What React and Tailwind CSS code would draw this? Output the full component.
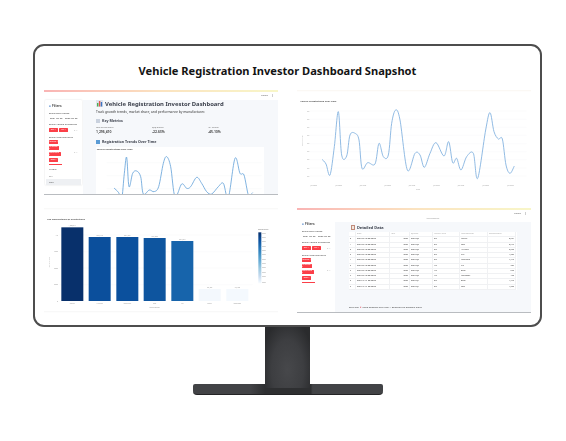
import { Fragment } from "react";

// zoomed coords (3x) traced from the reference
const trendPoints = [
  [252, 444], [266, 458], [275, 478], [283, 400], [290, 352], [297, 440], [308, 400], [320, 393], [332, 410],
  [340, 462], [358, 450], [372, 455], [386, 440], [400, 370], [410, 350], [422, 380], [435, 470], [455, 432],
  [470, 445], [482, 440], [500, 412], [515, 430], [530, 455], [545, 462], [565, 440], [580, 430], [595, 472],
  [615, 355], [630, 400], [642, 405], [655, 465], [664, 462], [668, 458],
];

const fullTrendPoints = [
  [96, 358], [108, 372], [120, 405], [133, 320], [145, 215], [155, 345], [170, 348], [180, 285], [195, 280],
  [207, 300], [216, 385], [233, 368], [255, 372], [267, 310], [280, 350], [295, 345], [305, 250], [317, 210],
  [330, 240], [352, 390], [375, 340], [390, 345], [403, 382], [420, 340], [438, 308], [462, 348], [476, 305],
  [488, 368], [500, 355], [513, 390], [530, 350], [550, 340], [563, 415], [587, 270], [600, 218], [612, 275],
  [625, 297], [637, 297], [648, 375], [660, 400], [673, 378],
];

const bars = [
  { x: 94, top: 67, fill: "#08306b", label: "Maruti", value: "1,025,814" },
  { x: 176, top: 96, fill: "#0b4f9c", label: "Hyundai", value: "883,412" },
  { x: 259, top: 96, fill: "#0b509d", label: "Mahindra", value: "881,907" },
  { x: 341, top: 99, fill: "#0e559f", label: "Tata", value: "866,230" },
  { x: 424, top: 108, fill: "#1764ab", label: "Kia", value: "821,004" },
  { x: 506, top: 252, fill: "#f3f8fd", label: "BMW", value: "68,120" },
  { x: 589, top: 252, fill: "#f4f9fe", label: "Mercedes", value: "67,480" },
];

const tableRows = [
  ["0", "2023-09-30 00:00:00", "2023", "2023-Q3", "2W", "Maruti", "2,894"],
  ["1", "2023-09-30 00:00:00", "2023", "2023-Q3", "2W", "Tata", "2,646"],
  ["2", "2023-09-30 00:00:00", "2023", "2023-Q3", "2W", "Hyundai", "3,862"],
  ["3", "2023-09-30 00:00:00", "2023", "2023-Q3", "2W", "TVS", "1,283"],
  ["4", "2023-09-30 00:00:00", "2023", "2023-Q3", "2W", "Mahindra", "4,715"],
  ["5", "2023-09-30 00:00:00", "2023", "2023-Q3", "4W", "Kia", "986"],
  ["6", "2023-09-30 00:00:00", "2023", "2023-Q3", "4W", "Bajaj", "572"],
  ["7", "2023-09-30 00:00:00", "2023", "2023-Q3", "4W", "Mercedes", "470"],
  ["8", "2023-12-31 00:00:00", "2023", "2023-Q4", "2W", "Bajaj", "1,745"],
  ["9", "2023-12-31 00:00:00", "2023", "2023-Q4", "2W", "Tata", "1,292"],
];

function smooth(points) {
  let d = `M${points[0][0]} ${points[0][1]}`;
  for (let i = 0; i < points.length - 1; i++) {
    const p0 = points[i - 1] || points[i];
    const p1 = points[i];
    const p2 = points[i + 1];
    const p3 = points[i + 2] || p2;
    const c1x = p1[0] + (p2[0] - p0[0]) / 6;
    const c1y = p1[1] + (p2[1] - p0[1]) / 6;
    const c2x = p2[0] - (p3[0] - p1[0]) / 6;
    const c2y = p2[1] - (p3[1] - p1[1]) / 6;
    d += ` C${c1x} ${c1y} ${c2x} ${c2y} ${p2[0]} ${p2[1]}`;
  }
  return d;
}

function GradientLine() {
  return <div className="h-[1.5px] shrink-0 bg-gradient-to-r from-[#f9b4b4] via-[#fbe3c0] to-[#f8f6c8]" />;
}

function ShareBar() {
  return (
    <div className="flex h-[8px] shrink-0 items-center justify-end gap-[3px] bg-white pr-[4px] text-[2.5px] text-[#666]">
      <span>Share</span>
      <span>⋮</span>
    </div>
  );
}

function Chip({ width, children }) {
  return (
    <span className={`flex h-[4.5px] items-center justify-center rounded-[0.5px] bg-[#fb3f48] text-[2.2px] leading-none text-white ${width}`}>
      {children} ×
    </span>
  );
}

function SidebarFilters({ children }) {
  return (
    <div className="flex flex-col px-[4px] pt-[5px] text-[2.4px] leading-none text-[#444]">
      <div className="mb-[4.2px] flex items-center gap-[1px] text-[3.2px] font-semibold text-[#333]">
        <span className="text-[#3b76c4]">●</span>
        <span>Filters</span>
      </div>
      <div className="mb-[2.6px]">Select Date Range</div>
      <div className="mb-[4.2px] whitespace-nowrap pl-[1px]">2021-09-30 – 2023-09-30</div>
      <div className="mb-[1.95px] whitespace-nowrap">Select Vehicle Categories</div>
      <div className="mb-[3.55px] flex w-[29px] items-center justify-between">
        <div className="flex gap-[1.5px]">
          <Chip width="w-[8.5px]">2W</Chip>
          <Chip width="w-[8.5px]">4W</Chip>
        </div>
        <span className="text-[#666]">× ⌄</span>
      </div>
      <div className="mb-[1.55px]">Select Manufacturers</div>
      <div className="flex w-[29px] items-center justify-between">
        <div className="flex flex-col gap-[1.5px]">
          <Chip width="w-[9px]">Maruti</Chip>
          <Chip width="w-[10px]">Hyundai</Chip>
          <Chip width="w-[11.5px]">Mahindra</Chip>
          <Chip width="w-[9px]">Tata</Chip>
          <div className="h-[1px] w-[13px] bg-[#fb3f48]" />
        </div>
        <span className="text-[#666]">× ⌄</span>
      </div>
      {children}
    </div>
  );
}

function BarsIcon() {
  return (
    <svg width="7" height="7" viewBox="0 0 7 7" className="shrink-0">
      <rect width="7" height="7" fill="#dfe5ee" />
      <rect x="1" y="3" width="1.4" height="3.5" fill="#4caf50" />
      <rect x="2.9" y="1" width="1.4" height="5.5" fill="#e2574c" />
      <rect x="4.8" y="2" width="1.4" height="4.5" fill="#3b76c4" />
    </svg>
  );
}

function DashboardScreen() {
  return (
    <div className="flex h-[105px] flex-col overflow-hidden border-b border-[#b9bcc0]">
      <GradientLine />
      <div className="flex min-h-0 flex-1">
        <div className="w-[39px] shrink-0 bg-white pt-[8px]">
          <div className="mx-[1px] h-[85.5px] rounded-[1px] bg-white shadow-[0_0_2px_rgba(0,0,0,0.14)]">
            <SidebarFilters>
              <div className="mt-[1.5px] -ml-[3px] -mr-[3px] flex flex-col text-[#555]">
                <span className="flex h-[6.3px] items-center pl-[3px]">Pragati</span>
                <span className="flex h-[6.3px] items-center pl-[3px]">KIA</span>
                <span className="flex h-[6.3px] items-center bg-[#eef0f3] pl-[3px]">Tata</span>
              </div>
            </SidebarFilters>
          </div>
        </div>
        <div className="flex min-w-0 flex-1 flex-col">
          <ShareBar />
          <div className="flex min-h-0 flex-1 flex-col overflow-hidden bg-[#f6f8fb] pl-[13px] pr-[14px]">
            <div className="flex items-center gap-[2px] text-[5.9px] font-bold leading-[8px] text-[#3a3f4b]">
              <BarsIcon />
              <span className="whitespace-nowrap">Vehicle Registration Investor Dashboard</span>
            </div>
            <p className="mt-[2.5px] whitespace-nowrap text-[3.3px] leading-[4px] text-[#333]">
              Track growth trends, market share, and performance by manufacturer.
            </p>
            <div className="mt-[4px] flex items-center gap-[2px] text-[3.6px] font-bold leading-[6px] text-[#3a3f4b]">
              <span className="h-[4px] w-[4px] bg-[#c9d1de]" />
              Key Metrics
            </div>
            <div className="mt-[2.75px] grid grid-cols-3 text-[2px] leading-[2.5px] text-[#777]">
              {[
                ["Total Registrations", "1,296,410"],
                ["QoQ Growth", "-22.63%"],
                ["YoY Growth", "-45.10%"],
              ].map(([label, value]) => (
                <div key={label}>
                  <div>{label}</div>
                  <div className="mt-[0.75px] text-[3.4px] font-semibold leading-[4px] text-[#333]">{value}</div>
                </div>
              ))}
            </div>
            <div className="mt-[4.5px] flex items-center gap-[2px] text-[3.6px] font-bold leading-[6px] text-[#3a3f4b]">
              <span className="h-[4px] w-[4px] bg-[#5a9bd5]" />
              Registration Trends Over Time
            </div>
            <div className="mt-[2.5px] h-[48px] shrink-0 bg-white">
              <svg viewBox="198 321 504 144" className="block h-[48px] w-[168px]">
                <text x="200" y="331" fontSize="7" fontWeight="600" fill="#444">Vehicle Registrations Over Time</text>
                {[368, 407, 446].map((y) => (
                  <line key={y} x1="230" x2="695" y1={y} y2={y} stroke="#f1f2f4" strokeWidth="1" />
                ))}
                <path d={smooth(trendPoints)} fill="none" stroke="#5f9fd8" strokeWidth="2.4" />
              </svg>
            </div>
          </div>
        </div>
      </div>
    </div>
  );
}

function LineChartScreen() {
  const gridY = [213, 238, 262, 286, 311, 335, 359, 384, 408];
  const ticks = [70, 145, 218, 292, 365, 438, 512, 586, 660];
  return (
    <div className="h-[105px]">
      <svg viewBox="21 150 702 315" className="block h-[105px] w-[234px]">
        <line x1="21" x2="723" y1="152" y2="152" stroke="#f7f3ec" strokeWidth="2" />
        <text x="31" y="186" fontSize="7" fontWeight="600" fill="#444">Vehicle Registrations Over Time</text>
        {gridY.map((y) => (
          <g key={y}>
            <line x1="60" x2="710" y1={y} y2={y} stroke="#f3f4f6" strokeWidth="1" />
            <text x="50" y={y + 2} fontSize="5" fill="#aaa">10k</text>
          </g>
        ))}
        <text x="40" y="318" fontSize="5" fill="#aaa" transform="rotate(-90 40 318)">Registrations</text>
        {ticks.map((x) => (
          <text key={x} x={x - 9} y="438" fontSize="5" fill="#aaa">Jan 2022</text>
        ))}
        <text x="379" y="450" fontSize="5" fill="#aaa">Date</text>
        <path d={smooth(fullTrendPoints)} fill="none" stroke="#7fb0de" strokeWidth="2.6" />
      </svg>
    </div>
  );
}

function BarChartScreen() {
  const barWidth = 66;
  const baseline = 288;
  const stops = ["#08306b", "#0b4f9c", "#2171b5", "#4292c6", "#6baed6", "#9ecae1", "#c6dbef", "#f7fbff"];
  return (
    <div className="h-[105px]">
      <svg viewBox="42 9 702 315" className="block h-[105px] w-[234px]">
        <defs>
          <linearGradient id="colorbar" x1="0" x2="0" y1="0" y2="1">
            {stops.map((color, i) => (
              <stop key={color} offset={i / (stops.length - 1)} stopColor={color} />
            ))}
          </linearGradient>
        </defs>
        <line x1="42" x2="744" y1="11" y2="11" stroke="#f5f5f3" strokeWidth="2" />
        <line x1="42" x2="744" y1="320" y2="320" stroke="#f1f1f1" strokeWidth="2" />
        <text x="52" y="44" fontSize="6.5" fontWeight="600" fill="#444">Top Manufacturers by Registrations</text>
        {[90, 140, 189, 239].map((y) => (
          <line key={y} x1="88" x2="668" y1={y} y2={y} stroke="#f2f3f5" strokeWidth="1" />
        ))}
        {[["1M", 92], ["750k", 142], ["500k", 191], ["250k", 241], ["0", 290]].map(([label, y]) => (
          <text key={label} x="84" y={y} fontSize="5" fill="#999" textAnchor="end">{label}</text>
        ))}
        <text x="60" y="172" fontSize="5" fill="#aaa" textAnchor="middle" transform="rotate(-90 60 172)">Registrations</text>
        {bars.map((bar) => (
          <g key={bar.label}>
            <rect x={bar.x} y={bar.top} width={barWidth} height={baseline - bar.top} fill={bar.fill} />
            <text x={bar.x + barWidth / 2} y={bar.top - 3} fontSize="5" fill="#999" textAnchor="middle">{bar.value}</text>
            <text x={bar.x + barWidth / 2} y="297" fontSize="5" fill="#999" textAnchor="middle">{bar.label}</text>
          </g>
        ))}
        <text x="374" y="308" fontSize="5" fill="#999" textAnchor="middle">Manufacturer</text>
        <text x="684" y="76" fontSize="5" fill="#777">Registrations</text>
        <rect x="685" y="82" width="9" height="153" fill="url(#colorbar)" />
        {[86, 99, 112, 125, 138, 151, 164, 177, 190, 203, 216, 233].map((y) => (
          <text key={y} x="697" y={y} fontSize="4.5" fill="#999">800k</text>
        ))}
      </svg>
    </div>
  );
}

function TableScreen() {
  const columns = ["", "Date", "Year", "Quarter", "Vehicle_Type", "Manufacturer", "Registrations"];
  const cellBase = "flex h-[5.25px] items-center border-b border-r border-[#f0f1f3] px-[1px]";
  return (
    <div className="flex h-[105px] flex-col overflow-hidden border-b border-[#b9bcc0]">
      <GradientLine />
      <div className="flex min-h-0 flex-1">
        <div className="w-[38px] shrink-0 bg-white pt-[8px] pl-[1px]">
          <SidebarFilters />
        </div>
        <div className="flex min-w-0 flex-1 flex-col">
          <ShareBar />
          <div className="flex min-h-0 flex-1 flex-col bg-[#f6f8fb] px-[14px]">
            <div className="-mx-[14px] flex h-[4px] shrink-0 items-start justify-center bg-white text-[2px] leading-none text-[#999]">
              Manufacturer
            </div>
            <div className="mt-[1.5px] flex items-center gap-[2px] py-[0.5px] pl-[2px] text-[3.9px] font-bold leading-[7px] text-[#3a3f4b]">
              <span className="h-[5px] w-[4px] border-[0.5px] border-[#c08a7a] bg-[#f0e7dd]" />
              Detailed Data
            </div>
            <div className="mt-[1px] grid grid-cols-[7px_34px_20px_23px_27px_28px_28px] bg-white text-[2px] leading-none text-[#444]">
              {columns.map((col, i) => (
                <div key={col || i} className={`${cellBase} text-[#aaa]`}>{col}</div>
              ))}
              {tableRows.map((row) => (
                <Fragment key={row[0]}>
                  {row.map((cell, i) => (
                    <div key={i} className={`${cellBase} ${i === 2 || i === 6 ? "justify-end" : ""}`}>{cell}</div>
                  ))}
                </Fragment>
              ))}
            </div>
            <div className="mt-auto mb-[3px] flex items-center gap-[1px] whitespace-nowrap text-[2.25px] leading-none text-[#444]">
              <span>Built with</span>
              <span className="text-[#e0394a]">♥</span>
              <span>using Streamlit and Plotly | Deployed on Streamlit Cloud</span>
            </div>
          </div>
        </div>
      </div>
    </div>
  );
}

export default function App() {
  return (
    <div className="h-[441px] w-[566px] overflow-hidden bg-white pl-[33px] pt-[44px] font-['Noto_Sans',sans-serif]">
      {/* Monitor */}
      <div className="h-[283px] w-[509px] rounded-[11px] border-2 border-[#4d4d4d] bg-white px-[9px]">
        <h1 className="flex h-[44px] items-center justify-center pr-[20px] pt-[7px] text-[11.1px] font-bold text-[#141414]">
          Vehicle Registration Investor Dashboard Snapshot
        </h1>
        <div className="grid grid-cols-[234px_234px] gap-x-[19px] gap-y-[13px] blur-[0.35px]">
          <DashboardScreen />
          <LineChartScreen />
          <BarChartScreen />
          <TableScreen />
        </div>
      </div>

      {/* Stand */}
      <div className="flex w-[509px] flex-col items-center">
        <div className="relative z-10 -mb-[4px] h-[61px] w-[45px] bg-[#2c2d2f] bg-[radial-gradient(ellipse_at_50%_70%,#47484b_0%,#3d3e41_50%,#2a2b2d_85%)]" />
        <div className="h-[11px] w-[190px] rounded-t-[2px] rounded-b-[4px] border-b border-[#232325] bg-[linear-gradient(90deg,#424346_0%,#424346_30%,#2e2f31_38%,#2e2f31_62%,#424346_63%)]" />
      </div>
    </div>
  );
}
